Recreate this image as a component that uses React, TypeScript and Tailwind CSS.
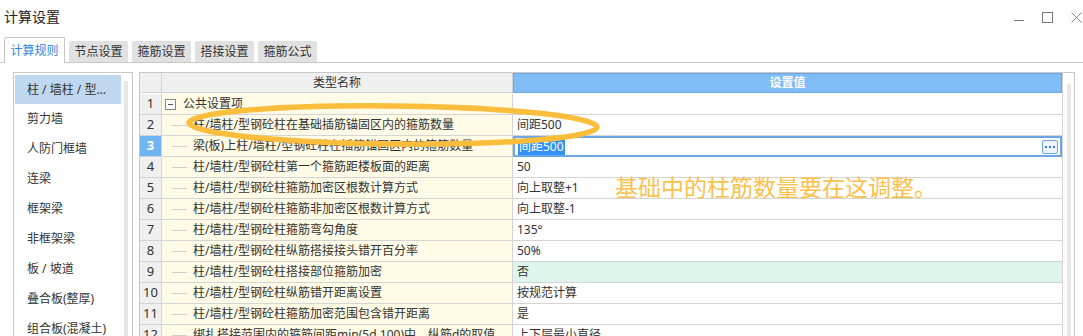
import { Fragment } from 'react';

type Row = {
  no: number;
  name: string;
  value: string;
  group?: boolean;
  selected?: boolean;
  green?: boolean;
};

const rows: Row[] = [
  { no: 1, name: '公共设置项', value: '', group: true },
  { no: 2, name: '柱/墙柱/型钢砼柱在基础插筋锚固区内的箍筋数量', value: '间距500' },
  { no: 3, name: '梁(板)上柱/墙柱/型钢砼柱在插筋锚固区内的箍筋数量', value: '间距500', selected: true },
  { no: 4, name: '柱/墙柱/型钢砼柱第一个箍筋距楼板面的距离', value: '50' },
  { no: 5, name: '柱/墙柱/型钢砼柱箍筋加密区根数计算方式', value: '向上取整+1' },
  { no: 6, name: '柱/墙柱/型钢砼柱箍筋非加密区根数计算方式', value: '向上取整-1' },
  { no: 7, name: '柱/墙柱/型钢砼柱箍筋弯勾角度', value: '135°' },
  { no: 8, name: '柱/墙柱/型钢砼柱纵筋搭接接头错开百分率', value: '50%' },
  { no: 9, name: '柱/墙柱/型钢砼柱搭接部位箍筋加密', value: '否', green: true },
  { no: 10, name: '柱/墙柱/型钢砼柱纵筋错开距离设置', value: '按规范计算' },
  { no: 11, name: '柱/墙柱/型钢砼柱箍筋加密范围包含错开距离', value: '是' },
  { no: 12, name: '绑扎搭接范围内的箍筋间距min(5d,100)中，纵筋d的取值', value: '上下层最小直径' },
];

const tabs = ['节点设置', '箍筋设置', '搭接设置', '箍筋公式'];

const sideItems = ['剪力墙', '人防门框墙', '连梁', '框架梁', '非框架梁', '板 / 坡道', '叠合板(整厚)', '组合板(混凝土)'];

export default function App() {
  return (
    <div className="relative w-[1083px] h-[336px] overflow-hidden bg-white text-[#333] font-['Noto_Sans','Noto_Sans_CJK_SC',sans-serif]">
      {/* title bar */}
      <div className="flex h-[38px] items-start pt-[7px] pl-[4px]">
        <span className="text-[14px] leading-[20px] text-[#222]">计算设置</span>
        <div className="ml-auto flex items-start gap-[18px] pt-[5px]">
          <svg width="10" height="10" viewBox="0 0 10 10" className="mt-0">
            <line x1="0" y1="8.5" x2="10" y2="8.5" stroke="#777" strokeWidth="1" />
          </svg>
          <svg width="11" height="11" viewBox="0 0 11 11">
            <rect x="0.5" y="0.5" width="10" height="10" fill="none" stroke="#777" strokeWidth="1" />
          </svg>
          <svg width="12" height="11" viewBox="0 0 12 11">
            <path d="M0.5 0.5 L10.5 10.5 M10.5 0.5 L0.5 10.5" stroke="#888" strokeWidth="1" />
          </svg>
        </div>
      </div>

      {/* tabs */}
      <div className="flex h-[25px] items-end gap-[4px] pl-[4px] border-b border-[#c8c8c8]">
        <div className="relative z-10 -mb-px flex h-[26px] w-[61px] items-center justify-center rounded-t-[2px] border border-b-0 border-[#c8c8c8] bg-white text-[12px] text-[#2d86e0]">
          计算规则
        </div>
        {tabs.map((t) => (
          <div
            key={t}
            className="flex h-[21px] w-[59px] items-center justify-center rounded-t-[2px] bg-[#e1e1e1] text-[12px] text-[#333]"
          >
            {t}
          </div>
        ))}
      </div>

      {/* body */}
      <div className="flex gap-[6px] pl-[13px] pt-[9px]">
        {/* side list */}
        <div className="flex h-[290px] w-[120px] border border-[#c8c8c8] p-px">
          <div className="flex w-[106px] flex-col">
            <div className="flex h-[29px] items-center bg-[#bfd8f0] pl-[12px] text-[12px] mt-px">
              柱 / 墙柱 / 型...
            </div>
            {sideItems.map((s) => (
              <div key={s} className="flex h-[30px] items-center pl-[12px] text-[12px]">
                {s}
              </div>
            ))}
          </div>
          <div className="ml-[3px] mt-[7px] h-[260px] w-[4px] bg-[#e6e6e6]" />
        </div>

        {/* grid */}
        <div className="flex h-[290px] w-[936px] border border-[#c8c8c8]">
          <div className="grid w-[922px] grid-cols-[22px_351px_549px] auto-rows-[21px] content-start text-[12px]">
            <div className="h-[20px] border-r border-b border-[#d4d4d4] bg-[#f0f0f0]" />
            <div className="flex h-[20px] items-center justify-center border-r border-b border-[#d4d4d4] bg-[#f0f0f0] text-[12px]">
              类型名称
            </div>
            <div className="flex h-[20px] items-center justify-center border border-[#6aa8ea] bg-[#80bcf6] text-[12px] font-bold text-white">
              设置值
            </div>
            {rows.map((r) => (
              <Fragment key={r.no}>
                <div
                  className={
                    r.selected
                      ? 'flex items-center justify-center border-r border-b border-[#d4d4d4] bg-[#6fb4f3] text-[13px] font-bold text-white'
                      : 'flex items-center justify-center border-r border-b border-[#d4d4d4] bg-[#f0f0f0] text-[13px]'
                  }
                >
                  {r.no}
                </div>
                <div className="flex items-center overflow-hidden whitespace-nowrap border-r border-b border-[#d4d4d4] bg-[#fffbe6]">
                  {r.group ? (
                    <>
                      <span className="ml-[3px] flex h-[11px] w-[11px] items-center justify-center border border-[#888] bg-white">
                        <span className="h-px w-[5px] bg-[#555]" />
                      </span>
                      <span className="ml-[7px]">{r.name}</span>
                    </>
                  ) : (
                    <>
                      <span className="ml-[10px] h-px w-[15px] bg-[#d0d0d0]" />
                      <span className="ml-[6px]">{r.name}</span>
                    </>
                  )}
                </div>
                {r.selected ? (
                  <div className="flex items-center border-2 border-[#6aa6e6] bg-white pl-[3px] pr-[2px]">
                    <span className="bg-[#3390f5] px-px leading-[16px] text-white">{r.value}</span>
                    <span className="ml-auto flex h-[14px] w-[16px] items-center justify-center gap-[2px] rounded-[2px] border border-[#6aa6e6] bg-[#eef2fa]">
                      <span className="h-[2px] w-[2px] bg-[#3a80d8]" />
                      <span className="h-[2px] w-[2px] bg-[#3a80d8]" />
                      <span className="h-[2px] w-[2px] bg-[#3a80d8]" />
                    </span>
                  </div>
                ) : (
                  <div
                    className={
                      r.green
                        ? 'flex items-center border-b border-[#d4d4d4] bg-[#ddf5eb] pl-[4px]'
                        : 'flex items-center border-b border-[#d4d4d4] bg-white pl-[4px]'
                    }
                  >
                    {r.value}
                  </div>
                )}
              </Fragment>
            ))}
          </div>
          <div className="w-[12px] border-l border-[#d4d4d4] pl-[4px] pt-[11px]">
            <div className="h-[260px] w-[4px] bg-[#e8e8e8]" />
          </div>
        </div>
      </div>

      {/* annotation overlay */}
      <svg className="pointer-events-none absolute left-0 top-0" width="1083" height="336">
        <ellipse
          cx="393"
          cy="125"
          rx="204"
          ry="19"
          transform="rotate(0.6 393 125)"
          fill="none"
          stroke="#fbbd3c"
          strokeWidth="5.5"
        />
      </svg>
      <div className="pointer-events-none absolute left-[615px] top-[172px] text-[23px] leading-[30px] text-[#fdc04a]">
        基础中的柱筋数量要在这调整。
      </div>
    </div>
  );
}
